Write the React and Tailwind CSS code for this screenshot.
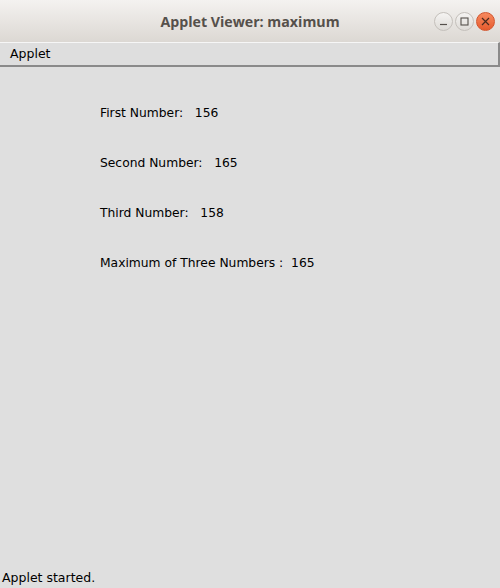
export default function App() {
  const dv = { fontFamily: '"DejaVu Sans", sans-serif' };
  return (
    <div className="w-[500px] h-[588px] flex flex-col bg-[#dfdfdf] overflow-hidden" style={dv}>
      <div className="h-[42px] flex items-center relative bg-gradient-to-b from-[#f4f2f0] to-[#dcd8d3]">
        <div className="flex-1 text-center text-[14.2px] font-bold text-[#55504b] pt-[1px]" style={{ fontFamily: '"Open Sans", "DejaVu Sans", sans-serif' }}>
          Applet Viewer: maximum
        </div>
        <div className="absolute right-[5px] top-[12px] flex gap-[2px]">
          <div className="w-[19px] h-[19px] rounded-full border border-[#c4c0bb] bg-gradient-to-b from-[#f5f4f2] to-[#dedbd7] flex items-center justify-center">
            <svg width="9" height="9" viewBox="0 0 9 9"><path d="M1 7.5h7" stroke="#55504b" strokeWidth="1.2" /></svg>
          </div>
          <div className="w-[19px] h-[19px] rounded-full border border-[#c4c0bb] bg-gradient-to-b from-[#f5f4f2] to-[#dedbd7] flex items-center justify-center">
            <svg width="9" height="9" viewBox="0 0 9 9"><rect x="1" y="1" width="7" height="7" fill="none" stroke="#55504b" strokeWidth="1.1" /></svg>
          </div>
          <div className="w-[19px] h-[19px] rounded-full border border-[#d3542c] bg-gradient-to-b from-[#f78a5f] to-[#e65a2c] flex items-center justify-center">
            <svg width="9" height="9" viewBox="0 0 9 9"><path d="M1 1L8 8M8 1L1 8" stroke="#4a2a1e" strokeWidth="1.2" /></svg>
          </div>
        </div>
      </div>
      <div className="h-[25px] flex items-center border-t border-t-[#f6f6f6] border-b-2 border-b-[#8a8a8a] border-r-2 border-r-[#8a8a8a] bg-[#dedede] pl-[10px] text-[12.5px] text-black">
        Applet
      </div>
      <div className="flex-1 relative text-[12.3px] text-black">
        <div className="flex flex-col pl-[100px] pt-[38px] gap-[34px] leading-[16px]">
          <div className="whitespace-pre">First Number:   156</div>
          <div className="whitespace-pre">Second Number:   165</div>
          <div className="whitespace-pre">Third Number:   158</div>
          <div className="whitespace-pre">Maximum of Three Numbers :  165</div>
        </div>
      </div>
      <div className="h-[22px] pl-[2px] text-[12.5px] text-black leading-[22px] pt-[1px]">Applet started.</div>
    </div>
  );
}
